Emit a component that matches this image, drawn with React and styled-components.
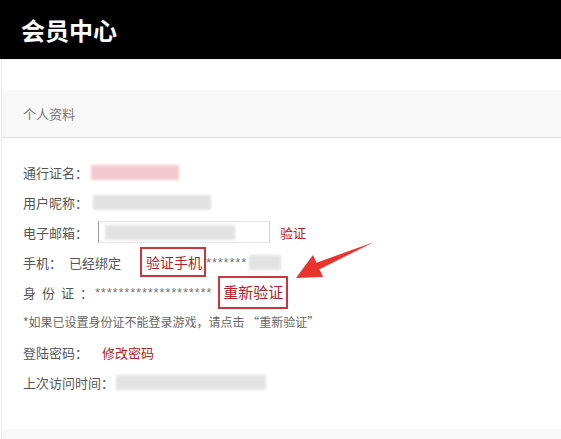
import React from 'react';
import styled, { createGlobalStyle } from 'styled-components';

const Global = createGlobalStyle`
  html, body { margin: 0; padding: 0; background: #fff; }
  body { font-family: "Noto Sans CJK SC", "Microsoft YaHei", sans-serif; }
`;

function Blur({ w, tone, ml }) {
  return <Smudge tone={tone} style={{ width: w, marginLeft: ml }} />;
}

function App() {
  return (
    <Page>
      <Global />
      <Header>会员中心</Header>
      <Card>
        <Spacer />
        <Tab>个人资料</Tab>
        <Body>
          <Row>
            <Label>通行证名：</Label>
            <Blur w={88} tone="pink" ml={3} />
          </Row>
          <Row>
            <Label>用户昵称：</Label>
            <Blur w={118} ml={5} />
          </Row>
          <Row>
            <Label>电子邮箱：</Label>
            <EmailBox>
              <Blur w={130} ml={6} />
            </EmailBox>
            <RedLink ml={10}>验证</RedLink>
          </Row>
          <Row>
            <Label>手机：</Label>
            <Plain ml={7}>已经绑定</Plain>
            <Boxed ml={19}>验证手机</Boxed>
            <Stars>*******</Stars>
            <Blur w={32} ml={2} />
          </Row>
          <Row>
            <Label spaced>身份证：</Label>
            <Stars ml={2}>********************</Stars>
            <Boxed ml={6} big>重新验证</Boxed>
          </Row>
          <Note>*如果已设置身份证不能登录游戏，请点击 “重新验证”</Note>
          <Row>
            <Label>登陆密码：</Label>
            <RedLink ml={14}>修改密码</RedLink>
          </Row>
          <Row>
            <Label>上次访问时间：</Label>
            <Blur w={150} ml={2} />
          </Row>
        </Body>
        <Footer />
      </Card>
      <Arrow viewBox="0 0 561 439">
        <path
          d="M374 242 L319.5 269.3 L323 277 L296 278 L313 255 L316.5 262.7 Z"
          fill="#e8332f"
        />
      </Arrow>
    </Page>
  );
}
export default App;

const Page = styled.div`
  position: relative;
  width: 561px;
  height: 439px;
  overflow: hidden;
  background: #fff;
`;

const Header = styled.div`
  height: 59px;
  background: #000;
  color: #fff;
  font-size: 24px;
  font-weight: 700;
  line-height: 59px;
  padding-left: 21px;
`;

const Card = styled.div`
  border-left: 1px solid #ececec;
  margin-left: 1px;
`;

const Spacer = styled.div`
  height: 30px;
  border-top: 1px solid #f2f2f2;
`;

const Tab = styled.div`
  height: 47px;
  line-height: 47px;
  background: #f8f8f8;
  border-bottom: 1px solid #dedede;
  padding-left: 21px;
  font-size: 13px;
  color: #777;
`;

const Body = styled.div`
  padding: 19px 0 0 21px;
  height: 272px;
`;

const Row = styled.div`
  display: flex;
  align-items: center;
  height: 30px;
  font-size: 13px;
  color: #555;
`;

const Label = styled.span`
  letter-spacing: ${(p) => (p.spaced ? '6px' : '0')};
  margin-right: ${(p) => (p.spaced ? '-6px' : '0')};
`;

const Plain = styled.span`
  margin-left: ${(p) => p.ml || 0}px;
`;

const RedLink = styled.span`
  color: #b3202a;
  margin-left: ${(p) => p.ml || 0}px;
`;

const Boxed = styled.span`
  color: #b3202a;
  border: 2px solid #c9363c;
  font-size: ${(p) => (p.big ? '15px' : '14px')};
  padding: ${(p) => (p.big ? '5px 3px 6px' : '4px 2px 4px 4px')};
  margin-left: ${(p) => p.ml || 0}px;
  line-height: 18px;
`;

const Stars = styled.span`
  color: #777;
  font-family: "Liberation Sans", sans-serif;
  font-size: 13px;
  letter-spacing: 0.8px;
  margin-left: ${(p) => p.ml || 0}px;
`;

const Smudge = styled.span`
  display: inline-block;
  height: 15px;
  background: ${(p) => (p.tone === 'pink' ? '#f3c9cf' : '#e2e2e2')};
  filter: blur(1.5px);
`;

const EmailBox = styled.span`
  display: flex;
  align-items: center;
  width: 172px;
  height: 22px;
  margin-left: 10px;
  border-left: 1px solid #999;
  border-top: 1px solid #e6e6e6;
  border-right: 1px solid #cfcfcf;
  border-bottom: 1px solid #e6e6e6;
  box-sizing: border-box;
`;

const Note = styled.div`
  height: 30px;
  line-height: 30px;
  font-size: 12px;
  color: #666;
`;

const Footer = styled.div`
  height: 14px;
  background: #f8f8f8;
`;

const Arrow = styled.svg`
  position: absolute;
  left: 0;
  top: 0;
  width: 561px;
  height: 439px;
  pointer-events: none;
`;
